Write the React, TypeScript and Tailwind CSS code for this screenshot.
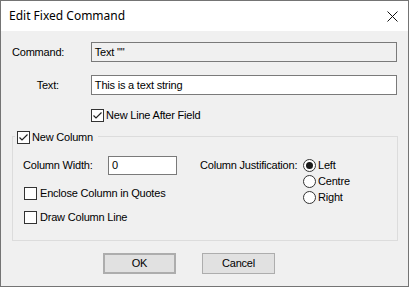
import React from "react";

const Check = ({ checked }: { checked: boolean }) => (
  <span className="relative inline-block w-[13px] h-[13px] border border-[#333333] bg-white shrink-0">
    {checked && (
      <svg className="absolute left-0 top-0" width="11" height="11" viewBox="0 0 11 11">
        <path d="M1.5 5.5 L4 8 L9.5 2.5" fill="none" stroke="#222" strokeWidth="1.2" />
      </svg>
    )}
  </span>
);

const Radio = ({ checked }: { checked: boolean }) => (
  <span className="relative inline-flex items-center justify-center w-[13px] h-[13px] rounded-full border border-[#333333] bg-white shrink-0">
    {checked && <span className="w-[7px] h-[7px] rounded-full bg-[#1a1a1a]" />}
  </span>
);

export default function App() {
  return (
    <div
      className="w-[409px] h-[287px] border border-[#747474] bg-[#f0f0f0] flex flex-col text-[11px] leading-[13px] tracking-[-0.2px] text-black overflow-hidden"
      style={{ fontFamily: '"Liberation Sans", Arial, sans-serif' }}
    >
      <div className="h-[30px] bg-white flex items-center justify-between shrink-0">
        <span className="pl-[8px] text-[12px] leading-[16px] tracking-normal text-black" style={{ fontFamily: '"Noto Sans", "Open Sans", sans-serif' }}>
          Edit Fixed Command
        </span>
        <svg className="mr-[10px]" width="11" height="11" viewBox="0 0 11 11">
          <path d="M0.5 0.5 L10.5 10.5 M10.5 0.5 L0.5 10.5" stroke="#111" strokeWidth="1" />
        </svg>
      </div>

      <div className="px-[11px] flex flex-col">
        <div className="mt-[11px] flex items-center h-[20px]">
          <span className="w-[79px]">Command:</span>
          <div className="w-[307px] h-[20px] border border-[#7a7a7a] bg-[#f0f0f0] flex items-center pl-[3px]">{'Text ""'}</div>
        </div>
        <div className="mt-[13px] flex items-center h-[20px]">
          <span className="w-[79px] text-right pr-[32px]">Text:</span>
          <div className="w-[307px] h-[20px] border border-[#7a7a7a] bg-white flex items-center pl-[3px]">This is a text string</div>
        </div>
        <div className="mt-[14px] flex items-center h-[13px] pl-[79px]">
          <Check checked />
          <span className="ml-[2px]">New Line After Field</span>
        </div>

        <div className="relative mt-[9px] pt-[5px]">
          <div className="w-[386px] h-[105px] border border-[#dcdcdc] flex pt-[19px]">
            <div className="pl-[10px] flex flex-col w-[187px]">
              <div className="flex items-center h-[19px]">
                <span className="w-[85px]">Column Width:</span>
                <div className="w-[69px] h-[19px] border border-[#7a7a7a] bg-white flex items-center pl-[3px]">0</div>
              </div>
              <div className="mt-[12px] flex items-center h-[13px] pl-[1px]">
                <Check checked={false} />
                <span className="ml-[3px]">Enclose Column in Quotes</span>
              </div>
              <div className="mt-[11px] flex items-center h-[13px] pl-[1px]">
                <Check checked={false} />
                <span className="ml-[3px]">Draw Column Line</span>
              </div>
            </div>
            <div className="flex">
              <span className="w-[103px] mt-[3px]">Column Justification:</span>
              <div className="flex flex-col gap-[3px] mt-[3px]">
                <div className="flex items-center h-[13px]">
                  <Radio checked />
                  <span className="ml-[2px]">Left</span>
                </div>
                <div className="flex items-center h-[13px]">
                  <Radio checked={false} />
                  <span className="ml-[2px]">Centre</span>
                </div>
                <div className="flex items-center h-[13px]">
                  <Radio checked={false} />
                  <span className="ml-[2px]">Right</span>
                </div>
              </div>
            </div>
          </div>
          <div className="absolute left-[3px] top-0 flex items-center bg-[#f0f0f0] pl-[2px] pr-[5px] h-[13px]">
            <Check checked />
            <span className="ml-[2px]">New Column</span>
          </div>
        </div>

        <div className="mt-[12px] flex pl-[91px]">
          <div className="w-[73px] h-[21px] border-2 border-[#adadad] bg-[#e1e1e1] flex items-center justify-center">OK</div>
          <div className="ml-[26px] w-[73px] h-[21px] border border-[#adadad] bg-[#e1e1e1] flex items-center justify-center">Cancel</div>
        </div>
      </div>
    </div>
  );
}
